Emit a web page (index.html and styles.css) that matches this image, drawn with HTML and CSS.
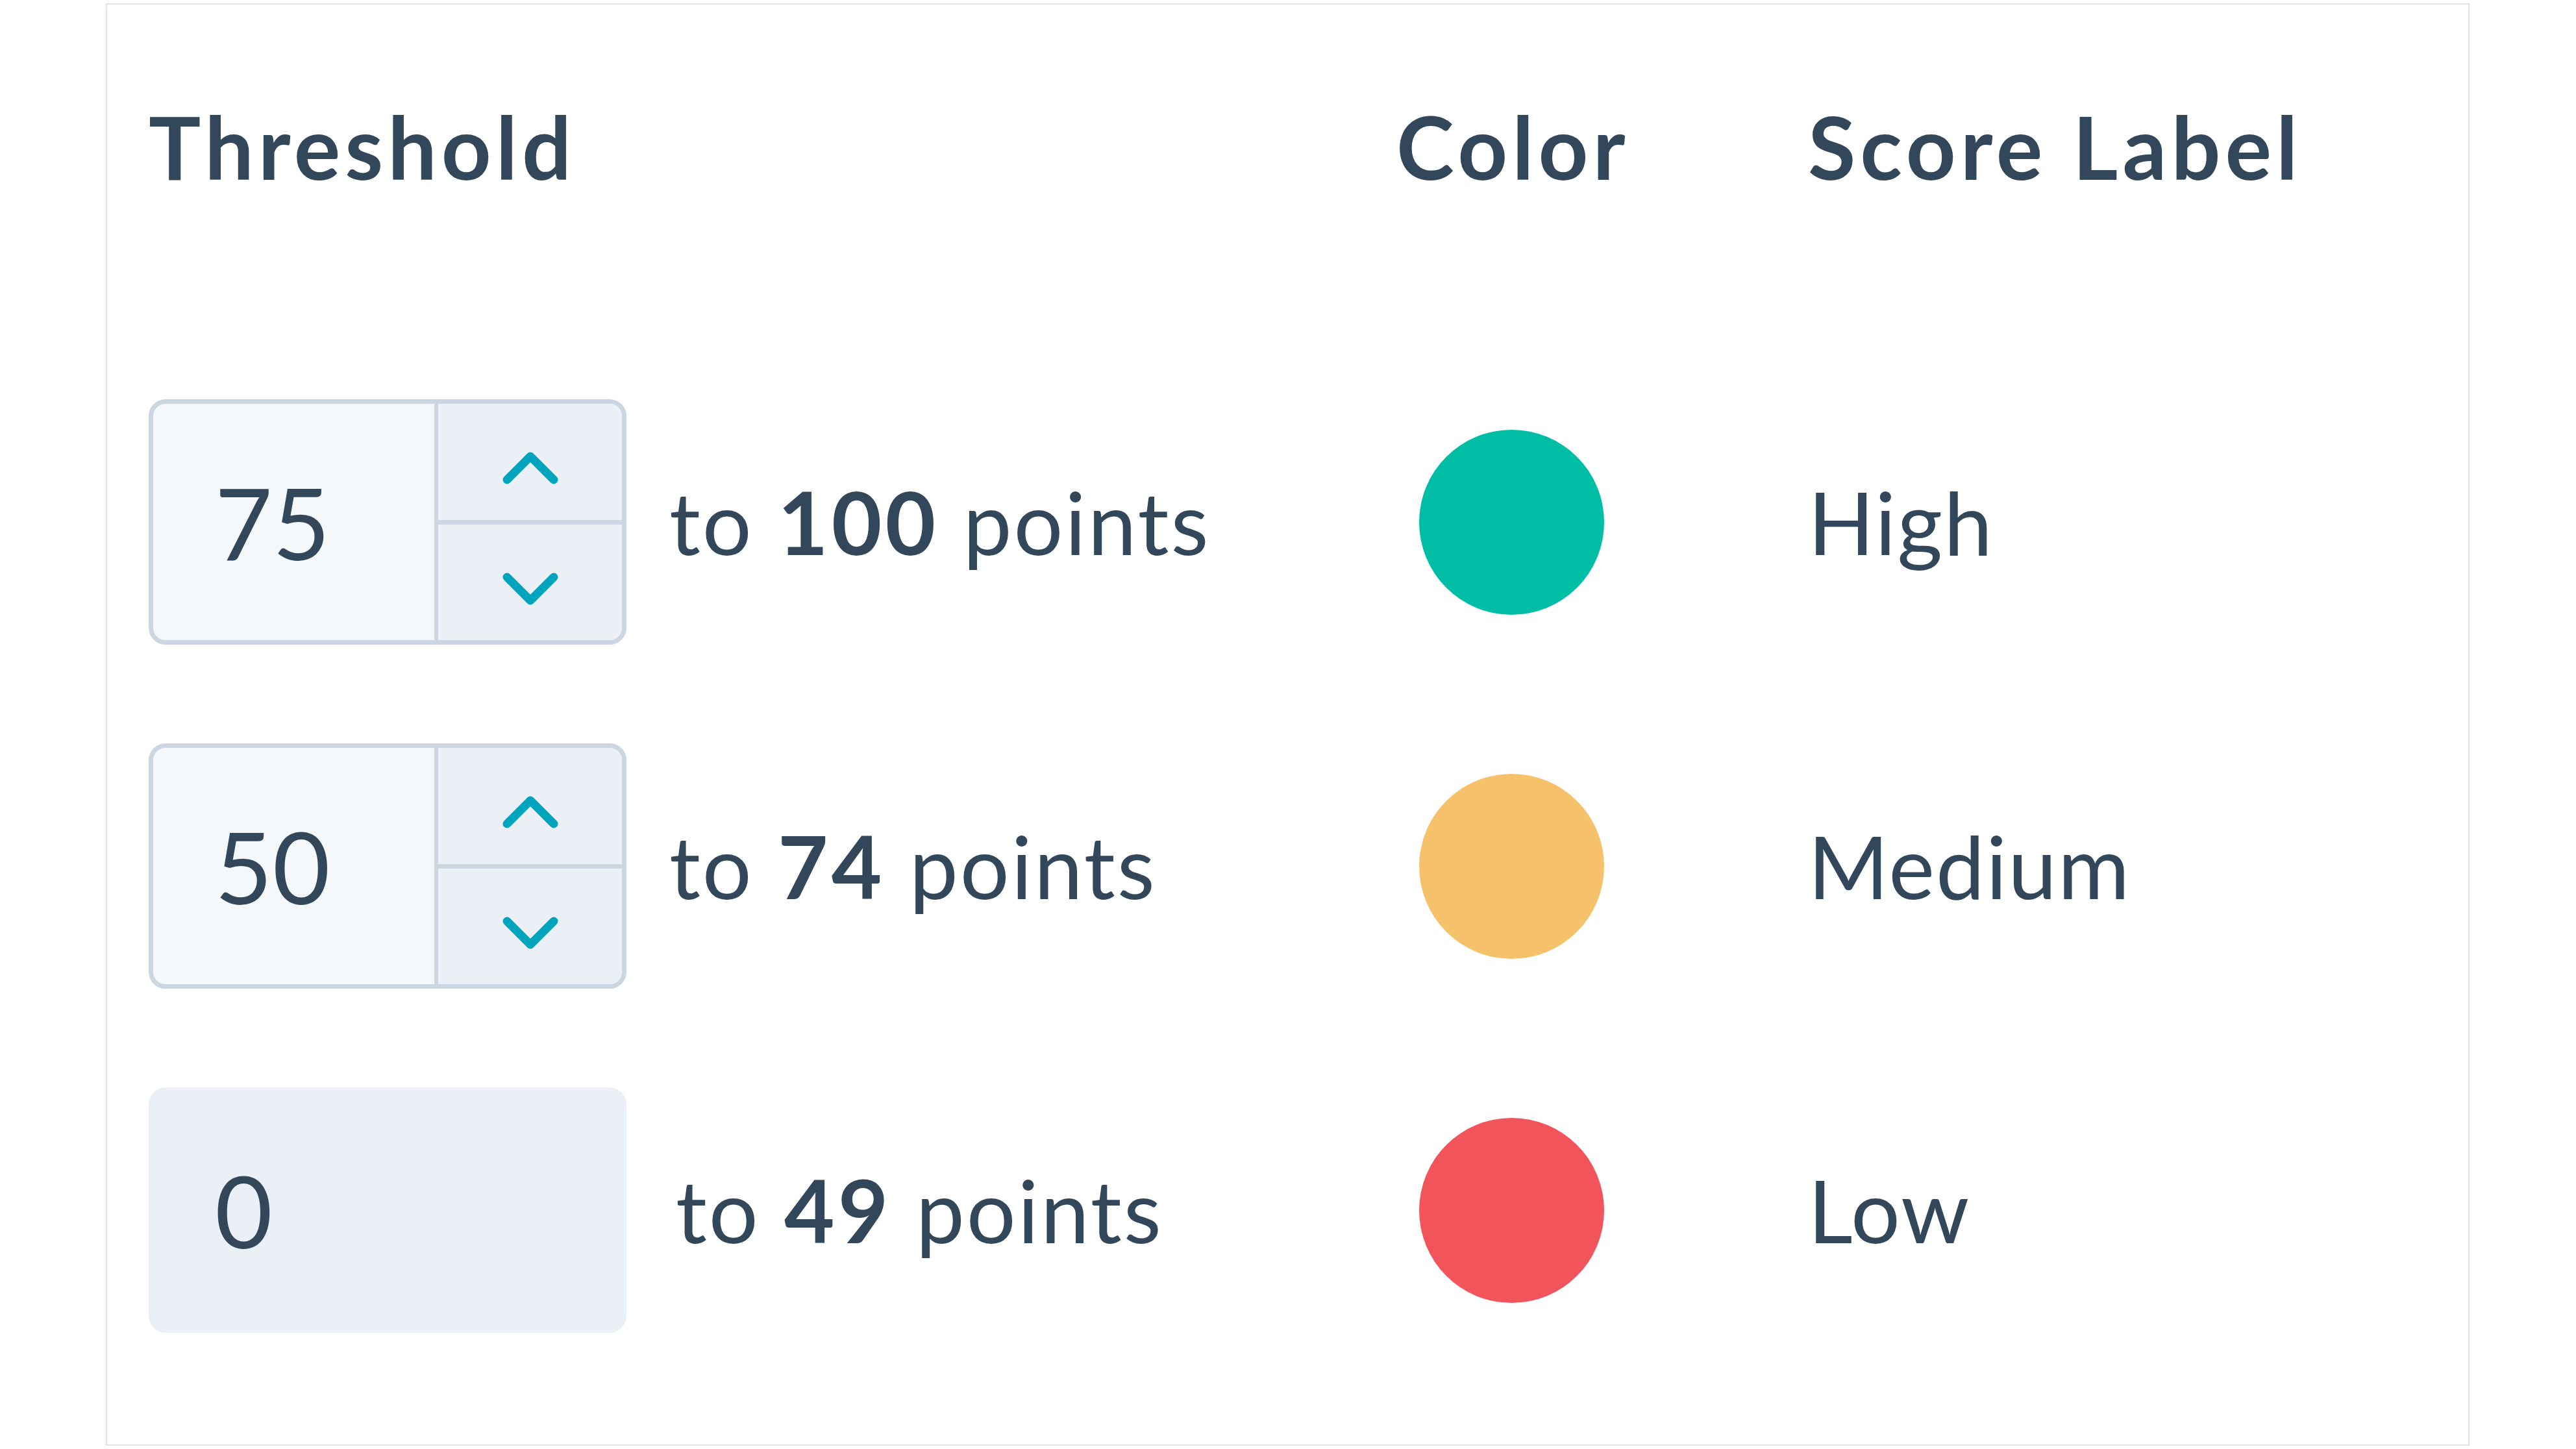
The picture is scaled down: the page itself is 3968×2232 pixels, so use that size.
FILE: index.html
```html
<!DOCTYPE html>
<html lang="en">
<head>
    <meta charset="UTF-8">
    <meta name="viewport" content="width=device-width, initial-scale=1.0">
    <title>Score Thresholds</title>
    <link rel="stylesheet" href="styles.css">
</head>
<body>

    <div class="score-card">
        <div class="score-grid">
            <div class="col-head">Threshold</div>
            <div class="col-head col-color">Color</div>
            <div class="col-head">Score Label</div>

            <!-- High -->
            <div class="threshold">
                <div class="number-input">
                    <input class="number-value" type="text" value="75">
                    <div class="stepper">
                        <button class="step">
                            <svg width="86" height="50" viewBox="0 0 86 50"><polyline points="7,43 43,7 79,43"/></svg>
                        </button>
                        <button class="step">
                            <svg width="86" height="50" viewBox="0 0 86 50"><polyline points="7,7 43,43 79,7"/></svg>
                        </button>
                    </div>
                </div>
                <span class="range-text">to <b>100</b> points</span>
            </div>
            <div class="color-cell"><span class="swatch swatch-high"></span></div>
            <div class="label-cell">High</div>

            <!-- Medium -->
            <div class="threshold">
                <div class="number-input">
                    <input class="number-value" type="text" value="50">
                    <div class="stepper">
                        <button class="step">
                            <svg width="86" height="50" viewBox="0 0 86 50"><polyline points="7,43 43,7 79,43"/></svg>
                        </button>
                        <button class="step">
                            <svg width="86" height="50" viewBox="0 0 86 50"><polyline points="7,7 43,43 79,7"/></svg>
                        </button>
                    </div>
                </div>
                <span class="range-text">to <b>74</b> points</span>
            </div>
            <div class="color-cell"><span class="swatch swatch-medium"></span></div>
            <div class="label-cell">Medium</div>

            <!-- Low (lowest bound is fixed) -->
            <div class="threshold">
                <div class="number-input locked">
                    <input class="number-value" type="text" value="0" readonly>
                </div>
                <span class="range-text range-locked">to <b>49</b> points</span>
            </div>
            <div class="color-cell"><span class="swatch swatch-low"></span></div>
            <div class="label-cell">Low</div>
        </div>
    </div>

</body>
</html>
```

FILE: styles.css
```css
body {
    margin: 0;
    font-family: 'Lato', sans-serif;
    color: #33475b;
    background-color: #fff;
}

.score-card {
    box-sizing: border-box;
    width: 3641px;
    margin: 5px 0 0 163px;
    padding: 0 0 96px 64px;
    border: 2px solid #e3e3e3;
    box-shadow: 0 2px 4px rgba(0, 0, 0, 0.06);
}

.score-grid {
    display: grid;
    grid-template-columns: 1932px 624px 1fr;
    grid-template-rows: 532px repeat(3, 530px);
    align-items: center;
}

.col-head {
    align-self: start;
    padding-top: 139px;
    font-size: 134px;
    font-weight: 700;
    line-height: 1.2;
    letter-spacing: 7px;
}

.col-color {
    margin-left: -10px;
}

.threshold {
    display: flex;
    align-items: center;
    gap: 66px;
}

/* number field with up / down stepper */
.number-input {
    display: flex;
    box-sizing: border-box;
    width: 736px;
    height: 378px;
    border: 7px solid #cbd6e2;
    border-radius: 26px;
    overflow: hidden;
    background-color: #f5f8fa;
}

.number-value {
    flex: 1;
    min-width: 0;
    padding: 0 0 0 95px;
    border: 0;
    outline: none;
    background: transparent;
    font: 400 153px 'Lato', sans-serif;
    color: #33475b;
}

.stepper {
    display: flex;
    flex-direction: column;
    width: 283px;
    border-left: 6px solid #cbd6e2;
    background-color: #eaf0f6;
}

.step {
    flex: 1;
    display: flex;
    align-items: center;
    justify-content: center;
    padding: 20px 0 0;
    border: 0;
    background: transparent;
    cursor: pointer;
}

.step + .step {
    border-top: 7px solid #cbd6e2;
}

.step polyline {
    fill: none;
    stroke: #00a4bd;
    stroke-width: 13;
    stroke-linecap: round;
    stroke-linejoin: round;
}

.number-input.locked {
    border-color: #eaf0f6;
    background-color: #eaf0f6;
}

.range-text,
.label-cell {
    font-size: 134px;
    line-height: 1.2;
}

.range-text {
    letter-spacing: 3px;
}

.label-cell {
    letter-spacing: 2px;
}

.range-text b {
    font-weight: 700;
    letter-spacing: 5px;
}

.range-locked {
    margin-left: 10px;
}

.swatch {
    display: block;
    width: 285px;
    height: 285px;
    margin-left: 25px;
    border-radius: 50%;
}

.swatch-high {
    background-color: #00bda5;
}

.swatch-medium {
    background-color: #f5c26b;
}

.swatch-low {
    background-color: #f2545b;
}
```
